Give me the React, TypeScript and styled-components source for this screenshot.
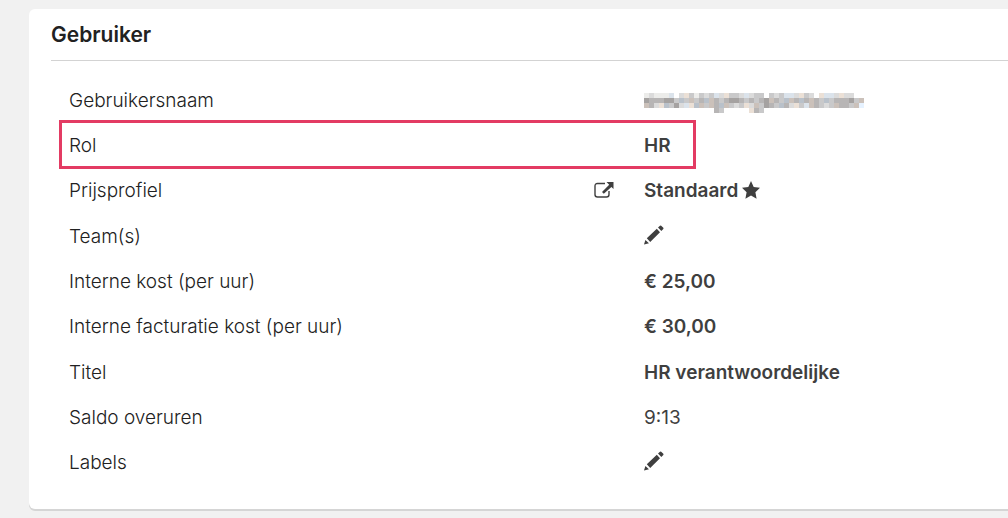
import React from 'react';
import styled, { createGlobalStyle } from 'styled-components';

const ink = '#212121';
const strong = '#3f3f3f';

const GlobalStyle = createGlobalStyle`
  * { box-sizing: border-box; }
  body {
    margin: 0;
    background: #f1f1f1;
    color: ${ink};
    font-family: Inter, "Liberation Sans", sans-serif;
    font-size: 19px;
    line-height: 28px;
  }
`;

const Page = styled.main`
  padding: 9px 0 8px 29px;
`;

const Card = styled.section`
  padding: 0 0 23px 22px;
  background: #fff;
  border-radius: 6px 0 0 6px;
  box-shadow: 0 2px 0 #d5d5d5;
`;

const Title = styled.h2`
  margin: 0;
  padding: 11px 0;
  border-bottom: 1px solid #d3d3d3;
  font-size: 21px;
  line-height: 29px;
  font-weight: 600;
`;

const Fields = styled.dl`
  display: grid;
  grid-auto-rows: 1fr;
  min-height: 408px;
  margin: 17px 0 0;
  padding-left: 18px;
`;

const Field = styled.div`
  position: relative;
  display: grid;
  grid-template-columns: minmax(0, 575px) 1fr;
  align-items: center;
`;

const Highlight = styled.span`
  position: absolute;
  top: -3px;
  bottom: 0;
  left: -10px;
  width: 637px;
  border: 3px solid #e33b63;
  pointer-events: none;
`;

const Label = styled.dt`
  display: flex;
  align-items: center;
  justify-content: space-between;
  padding-right: 30px;
  font-weight: 350;
`;

const Value = styled.dd<{ $plain?: boolean }>`
  display: flex;
  align-items: center;
  gap: 4px;
  margin: 0;
  color: ${strong};
  font-weight: ${(p) => (p.$plain ? 400 : 600)};
`;

const IconLink = styled.a`
  display: flex;
  padding-bottom: 3px;
  color: ${strong};
`;

const IconButton = styled.button`
  display: flex;
  padding: 0 0 4px;
  border: 0;
  background: none;
  color: ${strong};
  cursor: pointer;
`;

const Icon = styled.svg`
  display: block;
  fill: currentColor;
`;

const MaskedText = styled.span`
  display: block;
  padding-top: 4px;
`;

const Pencil = () => (
  <Icon width="20" height="20" viewBox="0 0 20 20" aria-hidden="true">
    <path d="M0 19.500 1.400 15 5 18.300ZM2.800 13.200 12.800 3.800 16 7.200 6.200 16.900ZM14 2.600 16 .7Q16.600.2 17.200.7L19.300 2.800Q19.800 3.400 19.300 4L17.300 6Z" />
  </Icon>
);

const External = () => (
  <Icon width="20" height="18" viewBox="0 0 20 18" aria-hidden="true">
    <path
      d="M11 2.500H3.500Q1 2.500 1 5V13.500Q1 16 3.500 16H12.500Q15 16 15 13.500V10"
      fill="none"
      stroke="currentColor"
      strokeWidth="1.4"
    />
    <path d="M12.500 1H19.500V8L17.400 5.900 9.800 12.800 8 11 15.200 3.700Z" />
  </Icon>
);

const Star = () => (
  <Icon width="18" height="20" viewBox="0 0 18 20" role="img" aria-label="Favoriet">
    <path d="m9 0 2.700 5.900 6.300.8-4.600 4.500 1.200 6.500L9 14.600l-5.600 3.100L4.600 11.200 0 6.700l6.300-.8Z" />
  </Icon>
);

const tones: Record<string, string> = {
  a: '#ececea',
  b: '#dbdbdb',
  c: '#c9c9ca',
  d: '#b7b5b5',
  e: '#a5a2a1',
  t: '#ebe0d6',
  T: '#cbc1ba',
  u: '#dbe3eb',
  U: '#b9c1ca',
  v: '#e6f2ff',
};

const mosaic = [
  'abaaau btcacbcubtccbubcc cbcuubtcb tuubtbb ',
  'edddeecUcTcdUTdcdeedcdcdeTdcUTdUdTdcUcdddecT',
  'TdbtUcebutUTcTdUTcbctbTcedcUdbtcuTdcbcTddcTv',
  '              dc     tdc                    ',
];

const Masked = () => (
  <MaskedText>
    <Icon
      width="220"
      height="20"
      viewBox="0 0 44 4"
      shapeRendering="crispEdges"
      role="img"
      aria-label="Verborgen"
    >
      {mosaic.map((row, y) =>
        [...row].map((tone, x) =>
          tone === ' ' ? null : (
            <rect key={`${x}-${y}`} x={x} y={y} width="1" height="1" fill={tones[tone]} />
          ),
        ),
      )}
    </Icon>
  </MaskedText>
);

interface Item {
  label: string;
  value: React.ReactNode;
  plain?: boolean;
  marked?: boolean;
  link?: boolean;
}

const edit = (label: string) => (
  <IconButton type="button" aria-label={label}>
    <Pencil />
  </IconButton>
);

const items: Item[] = [
  { label: 'Gebruikersnaam', value: <Masked /> },
  { label: 'Rol', value: 'HR', marked: true },
  { label: 'Prijsprofiel', value: <>Standaard <Star /></>, link: true },
  { label: 'Team(s)', value: edit('Team(s) bewerken') },
  { label: 'Interne kost (per uur)', value: '€ 25,00' },
  { label: 'Interne facturatie kost (per uur)', value: '€ 30,00' },
  { label: 'Titel', value: 'HR verantwoordelijke' },
  { label: 'Saldo overuren', value: '9:13', plain: true },
  { label: 'Labels', value: edit('Labels bewerken') },
];

export default function App() {
  return (
    <>
      <GlobalStyle />
      <Page>
        <Card>
          <Title>Gebruiker</Title>
          <Fields>
            {items.map((item) => (
              <Field key={item.label}>
                <Label>
                  {item.label}
                  {item.link && (
                    <IconLink href="#prijsprofiel" aria-label="Prijsprofiel openen">
                      <External />
                    </IconLink>
                  )}
                </Label>
                <Value $plain={item.plain}>
                  {item.value}
                  {item.marked && <Highlight />}
                </Value>
              </Field>
            ))}
          </Fields>
        </Card>
      </Page>
    </>
  );
}
